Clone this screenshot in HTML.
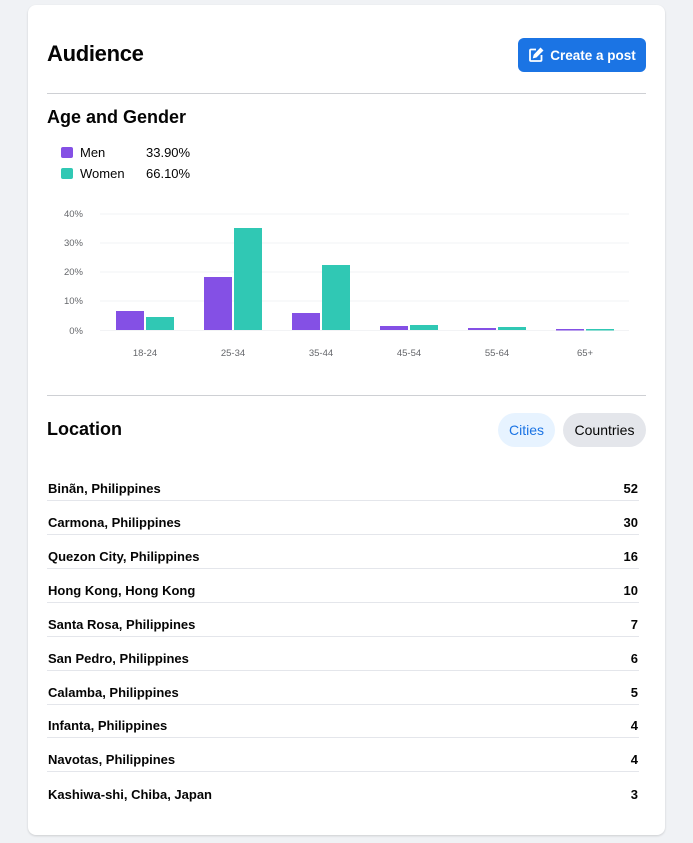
<!DOCTYPE html>
<html><head><meta charset="utf-8"><style>
*{box-sizing:border-box;margin:0;padding:0}
body{width:693px;height:843px;background:#f0f2f5;font-family:"Liberation Sans",sans-serif;color:#050505;position:relative;overflow:hidden}
.card{position:absolute;left:28px;top:5px;width:637px;height:830px;background:#fff;border-radius:8px;box-shadow:0 1px 2px rgba(0,0,0,.15)}
.abs{position:absolute}
h1{position:absolute;left:47px;top:41px;font-size:22px;font-weight:bold;letter-spacing:-0.3px}
.btn{position:absolute;left:518px;top:38px;width:128px;height:34px;background:#1b74e4;border-radius:6px;color:#fff;font-size:13.5px;font-weight:bold;display:flex;align-items:center;justify-content:center;gap:6px}
.hr{position:absolute;left:47px;width:599px;height:1px;background:#ced0d4}
h2{position:absolute;left:47px;font-size:18px;font-weight:bold}
.leg{position:absolute;left:61px;font-size:13px;display:flex;align-items:center}
.leg i{display:inline-block;width:12px;height:11px;border-radius:2px;margin-right:7px}
.row{position:absolute;left:47px;width:592px;height:34px;border-bottom:1px solid #e4e6eb;font-size:13px;font-weight:bold;display:flex;justify-content:space-between;align-items:flex-end;padding:0 1px 4px 1px}
.pill{position:absolute;top:413px;height:34px;border-radius:17px;font-size:14px;display:flex;align-items:center;justify-content:center}
</style></head><body>
<div class="card"></div>
<h1>Audience</h1>
<div class="btn"><svg width="16" height="16" viewBox="0 0 16 16" fill="none" stroke="#fff" stroke-width="1.8"><path d="M8 2.5H3a1 1 0 0 0-1 1V13a1 1 0 0 0 1 1h9.5a1 1 0 0 0 1-1V8"/><path d="M12.5 1.8l1.7 1.7L8 9.7 6 10.2l.5-2z" fill="#fff"/></svg>Create a post</div>
<div class="hr" style="top:93px"></div>
<h2 style="top:107px">Age and Gender</h2>
<div class="leg" style="top:145px"><i style="background:#8450e5"></i><span style="width:66px">Men</span>33.90%</div>
<div class="leg" style="top:166px"><i style="background:#30c8b4"></i><span style="width:66px">Women</span>66.10%</div>
<svg class="abs" style="left:0;top:0" width="693" height="380">
<g stroke="#f2f3f5" stroke-width="1"><line x1="100" x2="629" y1="214" y2="214"/><line x1="100" x2="629" y1="243" y2="243"/><line x1="100" x2="629" y1="272" y2="272"/><line x1="100" x2="629" y1="301" y2="301"/><line x1="100" x2="629" y1="330.5" y2="330.5"/></g>
<g font-family="Liberation Sans" font-size="9.5" fill="#65676b" text-anchor="end"><text x="83" y="217">40%</text><text x="83" y="246">30%</text><text x="83" y="275">20%</text><text x="83" y="304">10%</text><text x="83" y="334">0%</text></g>
<g font-family="Liberation Sans" font-size="9.5" fill="#65676b" text-anchor="middle"><text x="145" y="356">18-24</text><text x="233" y="356">25-34</text><text x="321" y="356">35-44</text><text x="409" y="356">45-54</text><text x="497" y="356">55-64</text><text x="585" y="356">65+</text></g>
<g fill="#8450e5"><rect x="116" y="311" width="28" height="19"/><rect x="204" y="277" width="28" height="53"/><rect x="292" y="313" width="28" height="17"/><rect x="380" y="326" width="28" height="4"/><rect x="468" y="328" width="28" height="2"/><rect x="556" y="329" width="28" height="1.5"/></g>
<g fill="#30c8b4"><rect x="146" y="317" width="28" height="13"/><rect x="234" y="228" width="28" height="102"/><rect x="322" y="265" width="28" height="65"/><rect x="410" y="325" width="28" height="5"/><rect x="498" y="327" width="28" height="3"/><rect x="586" y="329" width="28" height="1.5"/></g>
</svg>
<div class="hr" style="top:395px"></div>
<h2 style="top:419px">Location</h2>
<div class="pill" style="left:498px;width:57px;background:#e7f3ff;color:#1b74e4">Cities</div>
<div class="pill" style="left:563px;width:83px;background:#e4e6eb;color:#050505">Countries</div>
<div class="row" style="top:467px"><span>Binãn, Philippines</span><span>52</span></div>
<div class="row" style="top:501px"><span>Carmona, Philippines</span><span>30</span></div>
<div class="row" style="top:535px"><span>Quezon City, Philippines</span><span>16</span></div>
<div class="row" style="top:569px"><span>Hong Kong, Hong Kong</span><span>10</span></div>
<div class="row" style="top:603px"><span>Santa Rosa, Philippines</span><span>7</span></div>
<div class="row" style="top:637px"><span>San Pedro, Philippines</span><span>6</span></div>
<div class="row" style="top:671px"><span>Calamba, Philippines</span><span>5</span></div>
<div class="row" style="top:704px"><span>Infanta, Philippines</span><span>4</span></div>
<div class="row" style="top:738px"><span>Navotas, Philippines</span><span>4</span></div>
<div class="row" style="top:772px;border-bottom:none"><span>Kashiwa-shi, Chiba, Japan</span><span>3</span></div>
</body></html>
